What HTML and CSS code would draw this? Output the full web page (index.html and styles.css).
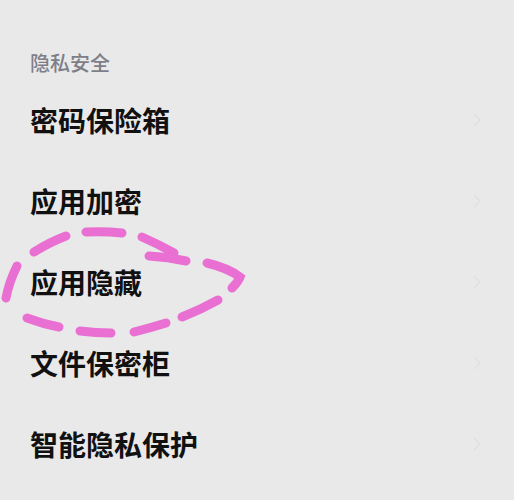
FILE: index.html
```html
<!DOCTYPE html>
<html lang="zh">
<head>
<meta charset="utf-8">
<link rel="stylesheet" href="styles.css">
</head>
<body>
<div class="page">
  <div class="section-title">隐私安全</div>
  <ul class="list">
    <li class="row"><span class="label">密码保险箱</span><svg class="chev" viewBox="0 0 8 14"><path d="M1 1 L7 7 L1 13"/></svg></li>
    <li class="row"><span class="label">应用加密</span><svg class="chev" viewBox="0 0 8 14"><path d="M1 1 L7 7 L1 13"/></svg></li>
    <li class="row"><span class="label">应用隐藏</span><svg class="chev" viewBox="0 0 8 14"><path d="M1 1 L7 7 L1 13"/></svg></li>
    <li class="row"><span class="label">文件保密柜</span><svg class="chev" viewBox="0 0 8 14"><path d="M1 1 L7 7 L1 13"/></svg></li>
    <li class="row"><span class="label">智能隐私保护</span><svg class="chev" viewBox="0 0 8 14"><path d="M1 1 L7 7 L1 13"/></svg></li>
  </ul>
  <svg class="scribble" viewBox="0 0 514 500" width="514" height="500">
    <g fill="none" stroke="#e96fd2" stroke-width="9" stroke-linecap="round">
      <path d="M17 266 Q9 282 6 298"/>
      <path d="M34 252 Q50 242 66 236"/>
      <path d="M86 232 Q104 231 122 233"/>
      <path d="M142 237 Q158 244 174 253"/>
      <path d="M149 256 Q168 257 186 261"/>
      <path d="M207 263 Q228 268 240 277 Q238 282 232 288"/>
      <path d="M218 300 Q200 310 182 317"/>
      <path d="M166 323 Q150 328 134 332"/>
      <path d="M111 333 Q96 333 80 331"/>
      <path d="M59 327 Q43 324 27 318"/>
    </g>
  </svg>
</div>
</body>
</html>
```
FILE: styles.css
```css
html, body {
  margin: 0;
  padding: 0;
  background: #e9e9e9;
}
.page {
  position: relative;
  width: 514px;
  height: 500px;
  overflow: hidden;
  padding-top: 49px;
  box-sizing: border-box;
  font-family: "Noto Sans CJK SC", "Noto Sans", sans-serif;
}
.section-title {
  padding-left: 30px;
  font-size: 20px;
  font-weight: 500;
  line-height: 28px;
  color: #7e7e88;
  margin-bottom: 2px;
}
.list {
  list-style: none;
  margin: 0;
  padding: 0;
}
.row {
  height: 81px;
  display: flex;
  align-items: center;
  justify-content: space-between;
  padding: 0 33px 0 30px;
}
.label {
  font-size: 28px;
  font-weight: 600;
  color: #111111;
}
.chev {
  width: 8px;
  height: 14px;
  fill: none;
  stroke: #e0e0e0;
  stroke-width: 1.5;
}
.scribble {
  position: absolute;
  left: 0;
  top: 0;
  pointer-events: none;
}
```
